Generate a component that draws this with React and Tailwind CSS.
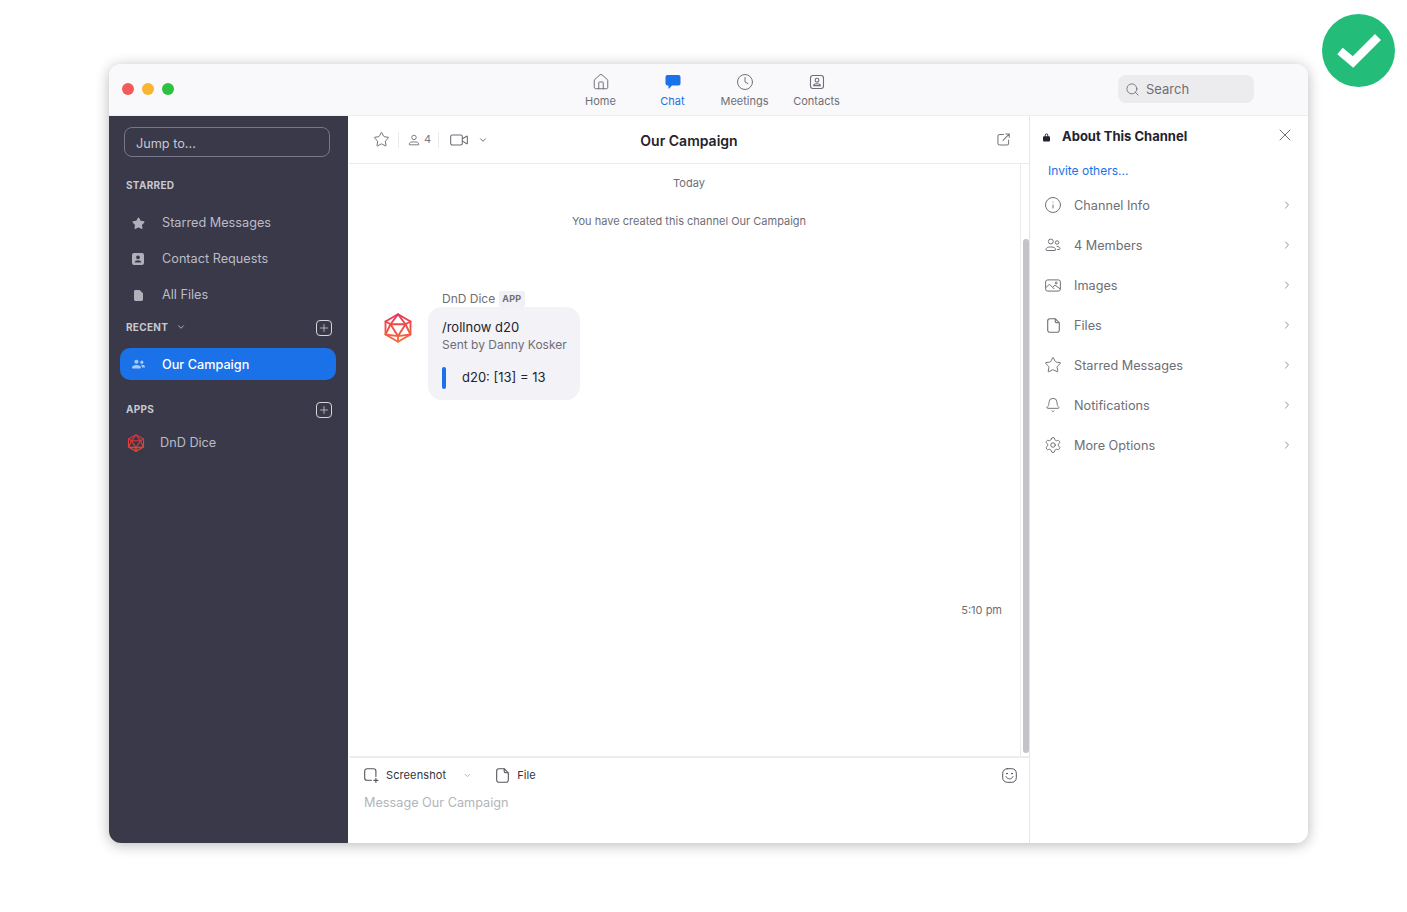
import React from 'react';
import {
  Home, Clock, Search, X, ChevronRight, ChevronDown, Star, Info, Bell, Settings, Video, Plus,
} from 'lucide-react';

const font = { fontFamily: 'Inter, "Liberation Sans", sans-serif' };

// d20 logo used for the app avatar and the sidebar entry
function D20({ className, id, from, to }) {
  const s = `url(#${id})`;
  return (
    <svg viewBox="0 0 24 24" className={className} fill="none" stroke={s} strokeWidth="1.5" strokeLinejoin="round" strokeLinecap="round">
      <defs>
        <linearGradient id={id} x1="12" y1="0" x2="12" y2="24" gradientUnits="userSpaceOnUse">
          <stop offset="0" stopColor={from} />
          <stop offset="1" stopColor={to} />
        </linearGradient>
      </defs>
      <path d="M12 1l10 5.8v10.4L12 23 2 17.2V6.8z" />
      <path d="M6 9h12l-6 9.5z" />
      <path d="M12 1L6 9M12 1l6 8M2 6.8L6 9M22 6.8L18 9M2 17.2L6 9M22 17.2L18 9M2 17.2l10 1.3M22 17.2l-10 1.3M12 23v-4.5" />
    </svg>
  );
}

function ContactsIcon() {
  return (
    <svg viewBox="0 0 16 16" className="w-[16px] h-[16px]" fill="none" stroke="#6e6e7a" strokeWidth="1.1">
      <rect x="1.5" y="1.5" width="13" height="13" rx="2.5" />
      <circle cx="8" cy="6.2" r="1.9" />
      <path d="M4.7 11.6c0-1.3 1-1.8 3.3-1.8s3.3.5 3.3 1.8z" />
    </svg>
  );
}

function ChatIcon() {
  return (
    <svg viewBox="0 0 16 16" className="w-[16px] h-[16px]" fill="#1a71e8">
      <path d="M2.5 1h11A2 2 0 0 1 15.5 3v6.5a2 2 0 0 1-2 2H7L4.2 14.6c-.3.3-.7.1-.7-.3v-2.8h-1a2 2 0 0 1-2-2V3a2 2 0 0 1 2-2z" />
    </svg>
  );
}

function PersonIcon() {
  return (
    <svg viewBox="0 0 14 14" className="w-[12px] h-[12px]" fill="none" stroke="#77777f" strokeWidth="1.1">
      <circle cx="7" cy="4" r="2.6" />
      <path d="M1.5 12.6v-1c0-1.6 1.6-2.4 5.5-2.4s5.5.8 5.5 2.4v1z" />
    </svg>
  );
}

function MembersIcon() {
  return (
    <svg viewBox="0 0 18 16" className="w-[16px] h-[14px]" fill="none" stroke="#6e6e76" strokeWidth="1.1">
      <circle cx="6.5" cy="4" r="2.8" />
      <path d="M1 13.5c0-2 1.6-3.3 5.5-3.3S12 11.5 12 13.5c0 .5-.3.8-.8.8H1.8c-.5 0-.8-.3-.8-.8z" />
      <circle cx="13.6" cy="5.2" r="2" />
      <path d="M13.2 9.6c2.3 0 3.8.9 3.8 2.5 0 .7-.4 1.1-1 1.1h-2.2" />
    </svg>
  );
}

function PhotoIcon() {
  return (
    <svg viewBox="0 0 18 14" className="w-[16px] h-[13px]" fill="none" stroke="#6e6e76" strokeWidth="1.1" strokeLinejoin="round">
      <rect x="0.7" y="0.7" width="16.6" height="12.6" rx="2.4" />
      <path d="M1 9.5l4-4 5.5 5.5M9 8.5l2.3-1.8 5.7 4" />
      <circle cx="12.6" cy="4.2" r="1.1" />
    </svg>
  );
}

function FileIcon({ className = 'w-[13px] h-[15px]', color = '#6e6e76' }) {
  return (
    <svg viewBox="0 0 13 15" className={className} fill="none" stroke={color} strokeWidth="1.1" strokeLinejoin="round">
      <path d="M2.8.7h5.4l4.1 4.1v7.2a2.2 2.2 0 0 1-2.2 2.3H2.8A2.2 2.2 0 0 1 .7 12V2.9A2.2 2.2 0 0 1 2.8.7z" />
      <path d="M8.2.7v2.2c0 1.2.8 1.9 2 1.9h2.1" />
    </svg>
  );
}

function ScreenshotIcon() {
  return (
    <svg viewBox="0 0 15 15" className="w-[15px] h-[15px]" fill="none" stroke="#55555e" strokeWidth="1.1" strokeLinecap="round">
      <path d="M7.5 12.3H3a2.3 2.3 0 0 1-2.3-2.3V3A2.3 2.3 0 0 1 3 .7h6.6A2.3 2.3 0 0 1 11.9 3v5.5" />
      <path d="M11.9 10.4v4M9.9 12.4h4" />
    </svg>
  );
}

function SmileIcon() {
  return (
    <svg viewBox="0 0 15 15" className="w-[15px] h-[15px]" fill="none" stroke="#55555e" strokeWidth="1" strokeLinecap="round">
      <rect x="0.7" y="0.7" width="13.6" height="13.6" rx="4.5" />
      <circle cx="5" cy="5.6" r=".5" fill="#55555e" />
      <circle cx="10" cy="5.6" r=".5" fill="#55555e" />
      <path d="M4 8.6c.7 1.6 2 2.2 3.5 2.2s2.8-.6 3.5-2.2" />
    </svg>
  );
}

function LockIcon() {
  return (
    <svg viewBox="0 0 8 10" className="w-[7px] h-[9px]" fill="#23232e">
      <path fillRule="evenodd" d="M2 3.5V2.4a2 2 0 0 1 4 0v1.1h.6c.8 0 1.4.6 1.4 1.4v3.3c0 .8-.6 1.4-1.4 1.4H1.4C.6 9.6 0 9 0 8.2V4.9c0-.8.6-1.4 1.4-1.4zm1 0h2V2.4a1 1 0 0 0-2 0z" />
    </svg>
  );
}

function SideContactIcon() {
  return (
    <svg viewBox="0 0 12 12" className="w-[12px] h-[12px]" fill="#b0b0ba">
      <path fillRule="evenodd" d="M2 0h8a2 2 0 0 1 2 2v8a2 2 0 0 1-2 2H2a2 2 0 0 1-2-2V2a2 2 0 0 1 2-2zm4 2.4a1.9 1.9 0 1 0 0 3.8 1.9 1.9 0 0 0 0-3.8zM2.8 9.6h6.4c0-1.6-1.2-2.4-3.2-2.4s-3.2.8-3.2 2.4z" />
    </svg>
  );
}

function SideFileIcon() {
  return (
    <svg viewBox="0 0 10 12" className="w-[9px] h-[11px]" fill="#b0b0ba">
      <path d="M1.6 0h4.6L10 3.6v6.8A1.6 1.6 0 0 1 8.4 12H1.6A1.6 1.6 0 0 1 0 10.4V1.6A1.6 1.6 0 0 1 1.6 0z" />
    </svg>
  );
}

function GroupIcon() {
  return (
    <svg viewBox="0 0 14 10" className="w-[13px] h-[10px]" fill="#a9c9f6">
      <circle cx="4.8" cy="2.5" r="2.2" />
      <path d="M0 9c0-2 1.8-3 4.8-3s4.8 1 4.8 3c0 .5-.3.8-.8.8H.8C.3 9.8 0 9.5 0 9z" />
      <circle cx="10.6" cy="3" r="1.7" />
      <path d="M10.7 5.7c2 0 3.3.9 3.3 2.5 0 .4-.3.7-.7.7h-2.6c0-1.3-.3-2.3-1-3z" />
    </svg>
  );
}

function NavItem({ icon, label, active }) {
  return (
    <div className="w-[72px] flex flex-col items-center gap-[4px] pt-[10px]">
      <div className="h-[16px] flex items-center justify-center">{icon}</div>
      <span className={`text-[11px] leading-[14px] ${active ? 'text-[#1a71e8]' : 'text-[#6e6e76]'}`}>{label}</span>
    </div>
  );
}

function SectionLabel({ children }) {
  return <span className="text-[10px] leading-[12px] font-bold tracking-[0.3px] text-[#c8c8d0]">{children}</span>;
}

function AddButton() {
  return (
    <div className="ml-auto mt-[2px] w-[16px] h-[16px] rounded-[4px] border border-[#d4d4da] flex items-center justify-center">
      <Plus className="w-[12px] h-[12px] text-[#d4d4da]" strokeWidth={1.5} />
    </div>
  );
}

function SideRow({ icon, label }) {
  return (
    <div className="h-[36px] flex items-center">
      <div className="w-[36px] flex justify-center">{icon}</div>
      <span className="ml-[6px] text-[12.7px] text-[#bcbcc6]">{label}</span>
    </div>
  );
}

function Sidebar() {
  return (
    <aside className="w-[239px] shrink-0 bg-[#39394a] flex flex-col pt-[11px]">
      <div className="ml-[15px] mr-[18px] h-[30px] rounded-[8px] border border-[#77778a] pl-[11px] pt-[3px] flex items-center text-[12.7px] text-[#c6c6d0]">
        Jump to...
      </div>
      <div className="ml-[17px] mt-[22px] h-[12px] flex items-center"><SectionLabel>STARRED</SectionLabel></div>
      <div className="pl-[11px] mt-[14px] flex flex-col">
        <SideRow icon={<Star className="w-[13px] h-[13px] text-[#b0b0ba] fill-[#b0b0ba]" />} label="Starred Messages" />
        <SideRow icon={<SideContactIcon />} label="Contact Requests" />
        <SideRow icon={<SideFileIcon />} label="All Files" />
      </div>
      <div className="ml-[17px] mr-[16px] mt-[6px] h-[16px] flex items-center">
        <SectionLabel>RECENT</SectionLabel>
        <ChevronDown className="ml-[8px] w-[10px] h-[10px] text-[#c8c8d0]" strokeWidth={2} />
        <AddButton />
      </div>
      <div className="ml-[11px] mr-[12px] mt-[13px] h-[32px] rounded-[10px] bg-[#1a71e8] flex items-center">
        <div className="w-[36px] flex justify-center"><GroupIcon /></div>
        <span className="ml-[6px] pt-[1px] text-[12.7px] font-medium text-white">Our Campaign</span>
      </div>
      <div className="ml-[17px] mr-[16px] mt-[21px] h-[16px] flex items-center">
        <SectionLabel>APPS</SectionLabel>
        <AddButton />
      </div>
      <div className="ml-[18px] mt-[17px] h-[18px] flex items-center">
        <D20 id="d20-side" from="#d92a3f" to="#e8502f" className="w-[18px] h-[18px]" />
        <span className="ml-[15px] text-[12.7px] text-[#bcbcc6]">DnD Dice</span>
      </div>
    </aside>
  );
}

function ChatHeader() {
  return (
    <div className="relative h-[48px] shrink-0 border-b border-[#ebebee] flex items-center pl-[24px] pr-[19px]">
      <Star className="w-[17px] h-[17px] text-[#6e6e76]" strokeWidth={1.4} />
      <div className="ml-[8px] w-px h-[16px] bg-[#ebebee]" />
      <div className="ml-[9px] flex items-center gap-[4px]">
        <PersonIcon />
        <span className="text-[11px] text-[#77777f]">4</span>
      </div>
      <div className="ml-[7px] w-px h-[16px] bg-[#ebebee]" />
      <Video className="ml-[10px] w-[20px] h-[20px] text-[#6e6e76]" strokeWidth={1.3} />
      <ChevronDown className="ml-[9px] w-[10px] h-[10px] text-[#55555e]" strokeWidth={2} />
      <span className="absolute left-0 right-0 top-[16px] text-center text-[14px] leading-[18px] font-semibold text-[#23232e] pointer-events-none">Our Campaign</span>
      <svg viewBox="0 0 14 14" className="ml-auto w-[13px] h-[13px]" fill="none" stroke="#77777f" strokeWidth="1.1" strokeLinecap="round">
        <path d="M7 1.5H3A2 2 0 0 0 1 3.5V11a2 2 0 0 0 2 2h7.5a2 2 0 0 0 2-2V7.5" />
        <path d="M6.5 8L13 1.3M9.5 1h3.7v3.7" />
      </svg>
    </div>
  );
}

function Message() {
  return (
    <div className="ml-[34px] mt-[63px] flex items-start">
      <D20 id="d20-msg" from="#ec2f55" to="#f4713a" className="mt-[22px] w-[30px] h-[30px]" />
      <div className="ml-[15px]">
        <div className="ml-[14px] flex items-center h-[16px]">
          <span className="text-[12px] text-[#6e6e76]">DnD Dice</span>
          <span className="ml-[4px] h-[16px] px-[3px] bg-[#f1f1f5] rounded-[2px] text-[9px] leading-[16px] font-bold tracking-[0.3px] text-[#6e6e76]">APP</span>
        </div>
        <div className="w-[152px] h-[93px] rounded-[14px] bg-[#f2f2f7] pl-[14px] pt-[12px]">
          <div className="text-[13px] leading-[16px] text-[#23232e]">/rollnow d20</div>
          <div className="mt-[2px] text-[12px] leading-[16px] text-[#6e6e76] whitespace-nowrap">Sent by Danny Kosker</div>
          <div className="mt-[14px] flex items-center h-[22px]">
            <div className="w-[4px] h-[22px] rounded-[2px] bg-[#1a71e8]" />
            <span className="ml-[16px] text-[13px] text-[#23232e]">d20: [13] = 13</span>
          </div>
        </div>
      </div>
    </div>
  );
}

function ChatColumn() {
  return (
    <section className="flex-1 min-w-0 flex flex-col border-l border-white">
      <ChatHeader />
      <div className="relative flex-1 min-h-0 flex">
        <div className="flex-1 min-w-0 flex flex-col">
          {/* the centred lines ignore the scrollbar, hence the right margin */}
          <div className="mt-[12px] mr-[-9px] text-center text-[11px] leading-[14px] text-[#6e6e76]">Today</div>
          <div className="mt-[24px] mr-[-9px] text-center text-[11px] leading-[14px] text-[#6e6e76]">You have created this channel Our Campaign</div>
          <Message />
          <div className="mt-[203px] pr-[18px] text-right text-[11px] leading-[14px] text-[#6e6e76]">5:10 pm</div>
        </div>
        <div className="w-[9px] shrink-0 border-l border-[#ebebee] pt-[75px] pl-[2px] pb-[3px] flex">
          <div className="w-[6px] h-full rounded-[3px] bg-[#c4c4c8]" />
        </div>
      </div>
      <div className="h-[87px] shrink-0 border-t-2 border-[#ededf0] pl-[15px] pr-[12px] pt-[10px]">
        <div className="flex items-center h-[15px]">
          <ScreenshotIcon />
          <span className="ml-[7px] text-[11px] tracking-[0.1px] text-[#33333d]">Screenshot</span>
          <ChevronDown className="ml-[17px] w-[9px] h-[9px] text-[#a0a0a8]" strokeWidth={2} />
          <div className="ml-[24px]"><FileIcon color="#55555e" /></div>
          <span className="ml-[8px] text-[11px] tracking-[0.1px] text-[#33333d]">File</span>
          <div className="ml-auto"><SmileIcon /></div>
        </div>
        <div className="mt-[12px] text-[12.7px] leading-[16px] text-[#b4b4ba]">Message Our Campaign</div>
      </div>
    </section>
  );
}

const panelRows = [
  { label: 'Channel Info', icon: <Info className="shrink-0 w-[18px] h-[18px] text-[#6e6e76]" strokeWidth={1.3} /> },
  { label: '4 Members', icon: <MembersIcon /> },
  { label: 'Images', icon: <PhotoIcon /> },
  { label: 'Files', icon: <FileIcon /> },
  { label: 'Starred Messages', icon: <Star className="shrink-0 w-[18px] h-[18px] text-[#6e6e76]" strokeWidth={1.3} /> },
  { label: 'Notifications', icon: <Bell className="shrink-0 w-[16px] h-[16px] text-[#6e6e76]" strokeWidth={1.4} /> },
  { label: 'More Options', icon: <Settings className="shrink-0 w-[18px] h-[18px] text-[#6e6e76]" strokeWidth={1.3} /> },
];

function InfoPanel() {
  return (
    <aside className="w-[279px] shrink-0 border-l border-[#e6e6ea] flex flex-col">
      <div className="h-[40px] flex items-center pl-[13px] pr-[13px] pt-[2px]">
        <LockIcon />
        <span className="ml-[12px] text-[13px] font-bold text-[#23232e]">About This Channel</span>
        <X className="ml-auto -mt-[5px] w-[20px] h-[20px] text-[#6e6e76]" strokeWidth={1.2} />
      </div>
      <div className="ml-[18px] mt-[7px] text-[12px] leading-[16px] text-[#1a71e8]">Invite others...</div>
      <div className="mt-[7px] flex flex-col">
        {panelRows.map((row) => (
          <div key={row.label} className="h-[40px] flex items-center pl-[15px] pr-[15px]">
            <div className="w-[16px] -mt-[2px] flex justify-center">{row.icon}</div>
            <span className="ml-[13px] text-[12.7px] text-[#6e6e76]">{row.label}</span>
            <ChevronRight className="ml-auto -mt-[2px] w-[12px] h-[12px] text-[#8e8e96]" strokeWidth={2} />
          </div>
        ))}
      </div>
    </aside>
  );
}

export default function App() {
  return (
    <div style={font} className="relative h-screen overflow-hidden bg-white pt-[64px] pl-[109px]">
      <div className="w-[1199px] h-[779px] rounded-[12px] overflow-hidden bg-white shadow-[0_2px_14px_rgba(0,0,0,0.28)] flex flex-col">
        <header className="h-[52px] shrink-0 bg-[#f9f9fb] border-b border-[#eeeef0] grid grid-cols-[1fr_auto_1fr]">
          <div className="flex items-center gap-[8px] pl-[13px] pb-[1px]">
            <span className="w-[12px] h-[12px] rounded-full bg-[#f35a5a]" />
            <span className="w-[12px] h-[12px] rounded-full bg-[#f9b52f]" />
            <span className="w-[12px] h-[12px] rounded-full bg-[#2dc140]" />
          </div>
          <nav className="flex">
            <NavItem label="Home" icon={<Home className="w-[18px] h-[18px] text-[#6e6e76]" strokeWidth={1.3} />} />
            <NavItem label="Chat" active icon={<ChatIcon />} />
            <NavItem label="Meetings" icon={<Clock className="w-[18px] h-[18px] text-[#6e6e76]" strokeWidth={1.3} />} />
            <NavItem label="Contacts" icon={<ContactsIcon />} />
          </nav>
          <div className="flex items-center justify-end pr-[54px] pb-[1px]">
            <div className="w-[136px] h-[28px] rounded-[8px] bg-[#ececef] flex items-center pl-[7px]">
              <Search className="w-[15px] h-[15px] text-[#6e6e76]" strokeWidth={1.4} />
              <span className="ml-[6px] pt-[2px] text-[13px] text-[#6e6e76]">Search</span>
            </div>
          </div>
        </header>
        <div className="flex-1 min-h-0 flex">
          <Sidebar />
          <ChatColumn />
          <InfoPanel />
        </div>
      </div>
      {/* verified badge floating over the corner */}
      <div className="absolute left-[1322px] top-[14px] w-[73px] h-[73px] rounded-full bg-[#23bd79] flex items-center justify-center">
        <svg viewBox="0 0 44 36" className="w-[44px] h-[36px]" fill="none" stroke="white" strokeWidth="8.5" strokeLinejoin="miter">
          <path d="M3 18l13 11L41 4" />
        </svg>
      </div>
    </div>
  );
}
